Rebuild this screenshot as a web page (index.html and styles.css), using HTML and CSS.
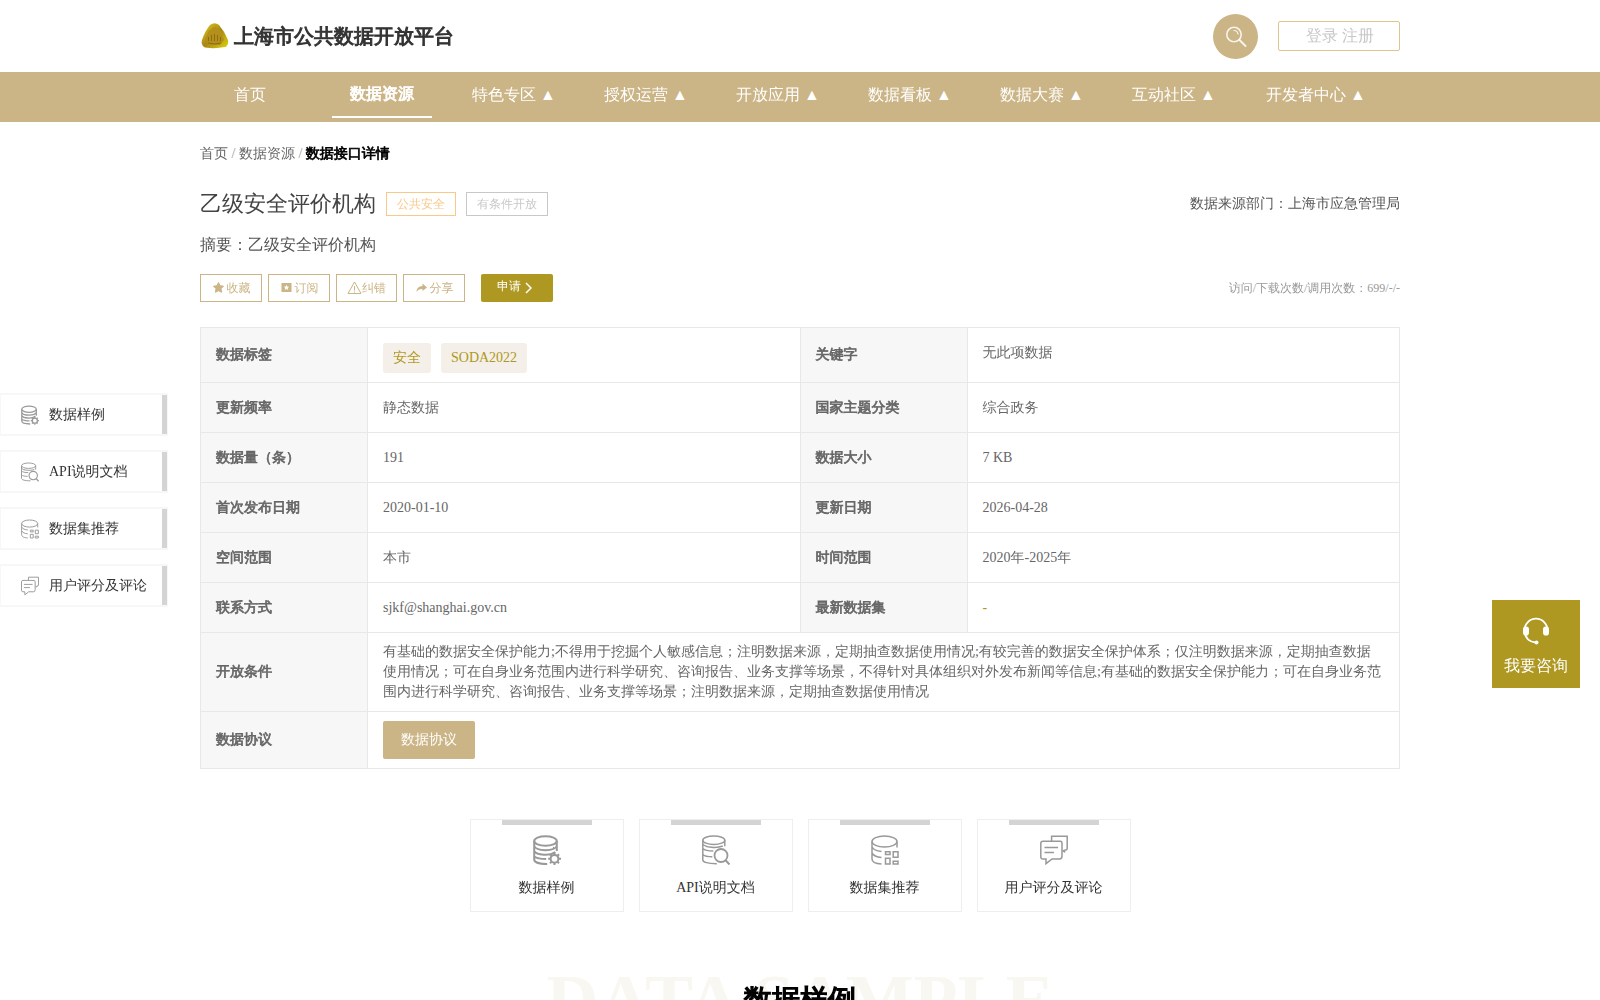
FILE: index.html
```html
<!DOCTYPE html>
<html lang="zh-CN">
<head>
  <meta charset="UTF-8">
  <title>上海市公共数据开放平台</title>
  <link rel="stylesheet" href="styles.css">
</head>
<body>

  <!-- icon symbols shared by side menu and cards -->
  <svg class="symbols">
    <symbol id="i-sample" viewBox="0 0 28 30">
      <g fill="none" stroke="currentColor" stroke-width="2">
        <ellipse cx="12.5" cy="6" rx="11.3" ry="4.8"/>
        <path d="M1.2 6v18.5c0 2.500 5 4.500 13 4.500M23.800 6v10M1.200 11c2 5.500 20.500 5.500 22.600 0M1.200 16c2.500 4.500 16 5 21 1M1.200 21.500c2 1.500 6 2.500 12 2.500"/>
        <circle cx="21.500" cy="23.800" r="3.900"/>
        <path d="M21.500 17.500v2.400M21.500 27.700v2.300M15.200 23.800h2.400M25.400 23.800h2.600M17 19.300l1.700 1.700M24.300 26.600l1.700 1.700M26 19.300l-1.700 1.700M18.700 26.600l-1.700 1.700"/>
      </g>
      <circle cx="20.500" cy="12.500" r=".7" fill="currentColor"/>
    </symbol>
    <symbol id="i-api" viewBox="0 0 28 30">
      <g fill="none" stroke="currentColor" stroke-width="1.500">
        <ellipse cx="11.800" cy="5.200" rx="11" ry="4.200"/>
        <path d="M.8 5.200v19.800c0 2 5 3.800 14 3.700M22.800 5.200v6M.8 9c2 3.500 14 4.500 20 2M.8 13.500c1.500 1.500 5.500 2.500 10.500 2.500M.8 19.500c1.500 1.500 5 2.300 9.500 2.300"/>
        <circle cx="19" cy="20.500" r="6.500" stroke-width="1.800"/>
        <path d="M23.500 25.200l4 4.300" stroke-width="2"/>
      </g>
      <circle cx="4.600" cy="11.500" r=".8" fill="currentColor"/>
    </symbol>
    <symbol id="i-dataset" viewBox="0 0 28 30">
      <g fill="none" stroke="currentColor" stroke-width="1.500">
        <ellipse cx="13.500" cy="6.500" rx="12.500" ry="5.500"/>
        <path d="M1 6.500v17.500c0 3 4 4.700 9.500 4.900M26 6.500v6M1 12c1.500 3 5 4 9.500 4.500M1 17.800c1.500 3 5 4.200 9.500 4.700"/>
        <path d="M14.500 16.800h4.500v2.700h-4.500zM22.200 16.800h4.800v5.500h-4.800zM14.500 23.300h4.500v5.700h-4.500zM22.200 26.200h4.800v2.800h-4.800z"/>
      </g>
    </symbol>
    <symbol id="i-comment" viewBox="0 0 28 30">
      <g fill="none" stroke="currentColor" stroke-width="1.500">
        <path d="M3 6.300h17.300q1.700 0 1.700 2v12.700q0 3-2.500 3h-7.500l-6 4.700v-4.700h-3q-2.200 0-2.200-2.500v-13q0-2.200 2.200-2.200z"/>
        <path d="M11.600 6v-4.700h15.600v12.200q0 1.700-2.700 1.700v1.500l-2-1.200M4.500 12.500h13.500M4.500 17.500h9.500"/>
      </g>
    </symbol>
  </svg>

  <div class="header">
    <div class="wrap header-inner">
      <div class="logo">
        <svg width="28" height="26" viewBox="0 0 28 26">
          <defs>
            <linearGradient id="gold" x1="0" y1="0" x2="1" y2="1">
              <stop offset="0" stop-color="#e2d01c"/>
              <stop offset=".5" stop-color="#a98616"/>
              <stop offset="1" stop-color="#ddd60c"/>
            </linearGradient>
          </defs>
          <path d="M9 2Q13.500-1.500 18 2Q24 9 27 17Q28 22 24 24Q14 26 4 24.500Q-.5 22 1 17Q4 8 9 2z" fill="url(#gold)"/>
          <path d="M13.500 3.500L20 8l3 9-4 5H8l-4-5L7.500 8z" fill="#b3901c"/>
          <path d="M7.500 18v-4M10.500 18v-6M13.500 18v-7M16.500 18v-6M19.500 18v-4M7 20q7 2 13 0" fill="none" stroke="#8d6c12"/>
        </svg>
        <span class="site-name">上海市公共数据开放平台</span>
      </div>
      <div class="header-right">
        <a class="search">
          <svg width="22" height="22" viewBox="0 0 22 22" fill="none" stroke="#fff" stroke-opacity=".85" stroke-linecap="round">
            <circle cx="9" cy="8.500" r="7.200" stroke-width="1.600"/>
            <path d="M9 4.500q3.500 0 4 3.500" stroke-width="1.200"/>
            <path d="M14.500 14l6 6" stroke-width="2"/>
          </svg>
        </a>
        <div class="login"><a>登录</a> <a>注册</a></div>
      </div>
    </div>
  </div>

  <div class="nav">
    <div class="wrap nav-inner">
      <a class="nav-item">首页</a>
      <a class="nav-item active">数据资源</a>
      <a class="nav-item">特色专区 ▲</a>
      <a class="nav-item">授权运营 ▲</a>
      <a class="nav-item">开放应用 ▲</a>
      <a class="nav-item">数据看板 ▲</a>
      <a class="nav-item">数据大赛 ▲</a>
      <a class="nav-item">互动社区 ▲</a>
      <a class="nav-item wide">开发者中心 ▲</a>
    </div>
  </div>

  <div class="wrap">
    <div class="breadcrumb"><a>首页</a> / <a>数据资源</a> / <b>数据接口详情</b></div>

    <div class="title-row">
      <h1>乙级安全评价机构</h1>
      <span class="label orange">公共安全</span>
      <span class="label">有条件开放</span>
      <span class="source">数据来源部门：上海市应急管理局</span>
    </div>
    <div class="summary">摘要：乙级安全评价机构</div>

    <div class="actions">
      <a class="action">
        <svg width="14" height="14" viewBox="0 0 14 14"><path d="M6.500 1.500l1.600 3.200 3.400.5-2.500 2.500.6 3.600L6.500 9.700l-3.100 1.600.6-3.600L1.500 5.200l3.400-.5z" fill="currentColor" stroke="currentColor" stroke-linejoin="round"/></svg>收藏</a>
      <a class="action">
        <svg width="14" height="14" viewBox="0 0 14 14"><path fill-rule="evenodd" d="M1.500 2h10v9h-10zM6.500 3.800L5.700 5.500l-1.900.2 1.400 1.300-.4 1.900L6.500 8l1.700.9L7.800 7l1.400-1.300-1.900-.2z" fill="currentColor"/></svg>订阅</a>
      <a class="action warn">
        <svg width="15" height="14" viewBox="0 0 15 14"><path d="M7.500 1L14 12.500H1zM7.500 5v4.500M7.500 10.500v1" fill="none" stroke="currentColor"/></svg>纠错</a>
      <a class="action">
        <svg width="14" height="14" viewBox="0 0 14 14"><path d="M7.500 2.500l4.500 4L7.500 10V8Q3.500 7.500 1.500 11Q1.500 5.500 7.500 5z" fill="currentColor"/></svg>分享</a>
      <a class="apply">申请
        <svg width="8" height="12" viewBox="0 0 8 12"><path d="M2 1l5 5-5 5" fill="none" stroke="#fff" stroke-width="1.500"/></svg></a>
      <span class="count">访问/下载次数/调用次数：699/-/-</span>
    </div>

    <table class="info">
      <tr class="tag-row">
        <th>数据标签</th>
        <td><div class="tags"><span class="tag">安全</span><span class="tag">SODA2022</span></div></td>
        <th>关键字</th>
        <td class="keyword">无此项数据</td>
      </tr>
      <tr><th>更新频率</th><td>静态数据</td><th>国家主题分类</th><td>综合政务</td></tr>
      <tr><th>数据量（条）</th><td>191</td><th>数据大小</th><td>7 KB</td></tr>
      <tr><th>首次发布日期</th><td>2020-01-10</td><th>更新日期</th><td>2026-04-28</td></tr>
      <tr><th>空间范围</th><td>本市</td><th>时间范围</th><td>2020年-2025年</td></tr>
      <tr><th>联系方式</th><td>sjkf@shanghai.gov.cn</td><th>最新数据集</th><td class="gold">-</td></tr>
      <tr class="terms-row">
        <th>开放条件</th>
        <td colspan="3">有基础的数据安全保护能力;不得用于挖掘个人敏感信息；注明数据来源，定期抽查数据使用情况;有较完善的数据安全保护体系；仅注明数据来源，定期抽查数据使用情况；可在自身业务范围内进行科学研究、咨询报告、业务支撑等场景，不得针对具体组织对外发布新闻等信息;有基础的数据安全保护能力；可在自身业务范围内进行科学研究、咨询报告、业务支撑等场景；注明数据来源，定期抽查数据使用情况</td>
      </tr>
      <tr class="agree-row">
        <th>数据协议</th>
        <td colspan="3"><a class="agree">数据协议</a></td>
      </tr>
    </table>

    <div class="cards">
      <a class="card"><svg><use href="#i-sample"/></svg>数据样例</a>
      <a class="card"><svg><use href="#i-api"/></svg>API说明文档</a>
      <a class="card"><svg><use href="#i-dataset"/></svg>数据集推荐</a>
      <a class="card"><svg><use href="#i-comment"/></svg>用户评分及评论</a>
    </div>

    <div class="section-title">
      <div class="en">DATA SAMPLE</div>
      <h2>数据样例</h2>
    </div>
  </div>

  <div class="side-menu">
    <a class="side-item"><svg><use href="#i-sample"/></svg>数据样例</a>
    <a class="side-item"><svg><use href="#i-api"/></svg>API说明文档</a>
    <a class="side-item"><svg><use href="#i-dataset"/></svg>数据集推荐</a>
    <a class="side-item"><svg><use href="#i-comment"/></svg>用户评分及评论</a>
  </div>

  <a class="consult">
    <svg width="28" height="28" viewBox="0 0 28 28">
      <path d="M2.500 13.500a11.500 11.800 0 0 1 23 0M2.500 14q1 11 12 11.500" fill="none" stroke="#fff" stroke-width="1.800"/>
      <rect x="1" y="9.500" width="6" height="9" rx="2.800" fill="#fff"/>
      <rect x="21" y="9.500" width="6" height="9" rx="2.800" fill="#fff"/>
      <circle cx="14.500" cy="25.500" r="2" fill="#fff"/>
    </svg>
    我要咨询
  </a>

</body>
</html>
```
FILE: styles.css
```css
html {
  overflow: hidden;
}
body {
  margin: 0;
  height: 1000px;
  overflow: hidden;
  font-family: "Liberation Serif", "WenQuanYi Zen Hei", "Noto Sans CJK SC", serif;
  font-size: 14px;
  color: #666;
  background: #fff;
}
.symbols {
  display: none;
}
.wrap {
  width: 1200px;
  margin: 0 auto;
}

/* the Chinese font has no bold face */
.site-name,
.nav-item.active,
.breadcrumb b,
.info th,
.section-title h2 {
  font-weight: bold;
  -webkit-text-stroke: .05em currentColor;
}

/* header */
.header-inner {
  height: 72px;
  display: flex;
  justify-content: space-between;
  align-items: center;
}
.logo {
  display: flex;
  align-items: center;
  gap: 5px;
  padding-left: 1px;
}
.site-name {
  font-size: 20px;
  color: #333;
}
.header-right {
  display: flex;
  align-items: center;
  gap: 20px;
}
.search {
  width: 45px;
  height: 45px;
  margin-top: 1px;
  border-radius: 50%;
  background: #cbb485;
  display: flex;
  align-items: center;
  justify-content: center;
}
.login {
  box-sizing: border-box;
  width: 122px;
  height: 30px;
  padding-left: 2px;
  line-height: 28px;
  border: 1px solid #dfc48c;
  border-radius: 2px;
  text-align: center;
  font-size: 16px;
  color: #c8c8c8;
}

/* nav */
.nav {
  background: #cbb485;
}
.nav-inner {
  height: 50px;
  display: flex;
  gap: 32px;
}
.nav-item {
  box-sizing: border-box;
  width: 100px;
  height: 46px;
  line-height: 46px;
  text-align: center;
  white-space: nowrap;
  font-size: 16px;
  color: #fff;
}
.nav-item.active {
  line-height: 44px;
  border-bottom: 2px solid #fff;
}
.nav-item.wide {
  width: 120px;
}

.breadcrumb {
  margin-top: 22px;
  line-height: 20px;
  color: #999;
}
.breadcrumb a {
  color: #666;
}
.breadcrumb b {
  color: #000;
}

/* title */
.title-row {
  display: flex;
  align-items: center;
  gap: 10px;
  height: 32px;
  margin-top: 24px;
}
h1 {
  margin: 0;
  font-size: 22px;
  font-weight: normal;
  color: #444;
}
.label {
  padding: 0 10px;
  line-height: 22px;
  border: 1px solid #c8c8c8;
  font-size: 12px;
  color: #c8c8c8;
}
.label.orange {
  border-color: #fac887;
  color: #fac887;
}
.source {
  margin-left: auto;
  color: #555;
}
.summary {
  margin-top: 15px;
  line-height: 20px;
  font-size: 16px;
  color: #555;
}

.actions {
  display: flex;
  gap: 6px;
  margin-top: 19px;
  height: 28px;
  font-size: 12px;
}
.action {
  box-sizing: border-box;
  width: 62px;
  border: 1px solid #cbb485;
  color: #cbb485;
  display: flex;
  align-items: center;
  justify-content: center;
  gap: 1px;
}
.action.warn {
  width: 61px;
  gap: 0;
}
.apply {
  box-sizing: border-box;
  width: 72px;
  margin-left: 10px;
  padding-left: 16px;
  border-radius: 2px;
  background: #ae9822;
  color: #fff;
  line-height: 24px;
}
.apply svg {
  vertical-align: -4px;
}
.count {
  margin-left: auto;
  line-height: 28px;
  color: #999;
}

/* info table */
.info {
  width: 1200px;
  margin-top: 25px;
  border-collapse: collapse;
  table-layout: fixed;
}
.info th,
.info td {
  box-sizing: border-box;
  height: 50px;
  padding: 0 15px;
  border: 1px solid #e8e8e8;
  text-align: left;
  line-height: 20px;
}
.info th {
  width: 167px;
  background: #f7f7f7;
}
.info .tag-row td {
  height: 55px;
}
.info .keyword {
  padding-bottom: 5px;
}
.tags {
  display: flex;
  gap: 10px;
  padding-top: 5px;
}
.tag {
  padding: 0 10px;
  line-height: 30px;
  border-radius: 3px;
  background: #f4efe8;
  color: #ae9822;
}
.info .gold {
  color: #ae9822;
}
.info .terms-row td {
  height: 79px;
}
.info .agree-row td {
  height: 57px;
}
.agree {
  display: block;
  width: 92px;
  line-height: 38px;
  border-radius: 2px;
  text-align: center;
  background: #cbb485;
  color: #fff;
}

/* anchor cards */
.cards {
  display: flex;
  justify-content: center;
  gap: 15px;
  margin-top: 50px;
}
.card {
  box-sizing: border-box;
  width: 154px;
  height: 93px;
  border: 1px solid #eee;
  display: flex;
  flex-direction: column;
  align-items: center;
  line-height: 20px;
  color: #333;
}
.card::before {
  content: "";
  width: 90px;
  height: 5px;
  background: #d4d4d4;
}
.card svg {
  width: 28px;
  height: 30px;
  margin: 10px 0 13px;
  color: #999;
}

.section-title {
  position: relative;
  margin-top: 48px;
  text-align: center;
}
.en {
  font-size: 72px;
  line-height: 80px;
  font-weight: bold;
  color: #f8f7f1;
}
.section-title h2 {
  position: absolute;
  top: 20px;
  left: 0;
  right: 0;
  margin: 0;
  font-size: 28px;
  line-height: 40px;
  color: #000;
}

/* floating blocks */
.side-menu {
  position: fixed;
  left: 0;
  top: 393px;
  display: flex;
  flex-direction: column;
  gap: 14px;
}
.side-item {
  box-sizing: border-box;
  width: 168px;
  height: 43px;
  padding-left: 20px;
  border: 2px solid #f7f7f7;
  border-width: 2px 1px;
  display: flex;
  align-items: center;
  gap: 10px;
  color: #333;
  background: #fff;
}
.side-item::after {
  content: "";
  width: 5px;
  height: 100%;
  margin-left: auto;
  background: #d4d4d4;
}
.side-item svg {
  width: 18px;
  height: 20px;
  color: #999;
}
.consult {
  position: fixed;
  right: 20px;
  top: 600px;
  width: 88px;
  height: 88px;
  display: flex;
  flex-direction: column;
  align-items: center;
  background: #ae9822;
  font-size: 16px;
  line-height: 20px;
  color: #fff;
}
.consult svg {
  margin: 17px 0 11px;
}
```
